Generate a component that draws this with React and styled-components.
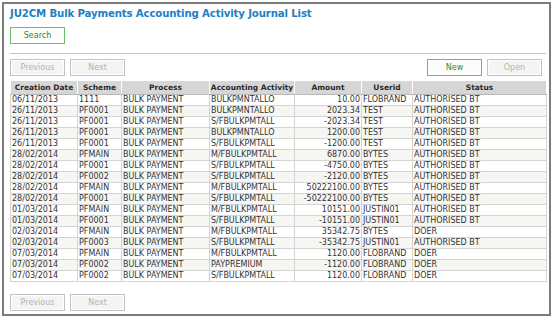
import styled, { createGlobalStyle } from "styled-components";

const GlobalStyle = createGlobalStyle`
    html, body {
        margin: 0;
        padding: 0;
        background: #ffffff;
    }
    body {
        padding: 2px;
    }
`;

const Frame = styled.div`
    box-sizing: border-box;
    width: 549px;
    height: 314px;
    border: 2px solid #7c7c7c;
    padding: 2px 3px 0 6px;
    display: flex;
    flex-direction: column;
    font-family: "DejaVu Sans", Verdana, sans-serif;
`;

const Title = styled.h1`
    margin: 0;
    font-size: 10.2px;
    font-weight: bold;
    color: #1c80c4;
    line-height: 16px;
    letter-spacing: -0.15px;
`;

const Row = styled.div`
    display: flex;
    align-items: center;
    gap: 5px;
    margin-top: ${(p) => p.$top || 0}px;
    margin-bottom: ${(p) => p.$bottom || 0}px;
    padding-right: ${(p) => p.$right || 0}px;
`;

const Spacer = styled.div`
    flex: 1;
`;

const Divider = styled.div`
    height: 1px;
    background: #c4c4c4;
    margin-top: 9px;
`;

const Button = styled.button`
    box-sizing: border-box;
    width: 55px;
    height: 17px;
    padding: 0;
    font-family: "DejaVu Sans", Verdana, sans-serif;
    font-size: 8px;
    border-radius: 0;
    border: 1px solid ${(p) => (p.$green ? "#6cba6c" : p.$soft ? "#a9d4a9" : "#c3c3c3")};
    background: ${(p) => (p.$green ? "#fbfdfb" : "#f4f4f4")};
    color: ${(p) => (p.$green ? "#2f8a2f" : "#b3b3b3")};
    box-shadow: inset 0 0 0 1px #ffffff;
`;

const Table = styled.table`
    border-collapse: collapse;
    width: 536px;
    margin-top: 4px;
    font-size: 8px;
    color: #333333;
    border: 1px solid #a8a8a8;
    table-layout: fixed;
`;

const Th = styled.th`
    background: #d6d6d6;
    color: #2a2a2a;
    font-size: 7.5px;
    font-weight: bold;
    height: 13px;
    padding: 0;
    border: 1px solid #ffffff;
    border-bottom-color: #b8b8b8;
    text-align: center;
    white-space: nowrap;
`;

const Tr = styled.tr`
    background: ${(p) => (p.$odd ? "#f6f6f2" : "#ffffff")};
`;

const Td = styled.td`
    height: 10px;
    line-height: 10px;
    padding: 0 1px;
    border: 1px solid #d4d4d4;
    text-align: ${(p) => (p.$right ? "right" : "left")};
    white-space: nowrap;
    overflow: hidden;
`;

const columns = [
    { label: "Creation Date", width: 67 },
    { label: "Scheme", width: 44 },
    { label: "Process", width: 88 },
    { label: "Accounting Activity", width: 85 },
    { label: "Amount", width: 67 },
    { label: "Userid", width: 51 },
    { label: "Status", width: 134 },
];

const rows = [
    ["06/11/2013", "1111", "BULK PAYMENT", "BULKPMNTALLO", "10.00", "FLOBRAND", "AUTHORISED BT"],
    ["26/11/2013", "PF0001", "BULK PAYMENT", "BULKPMNTALLO", "2023.34", "TEST", "AUTHORISED BT"],
    ["26/11/2013", "PF0001", "BULK PAYMENT", "S/FBULKPMTALL", "-2023.34", "TEST", "AUTHORISED BT"],
    ["26/11/2013", "PF0001", "BULK PAYMENT", "BULKPMNTALLO", "1200.00", "TEST", "AUTHORISED BT"],
    ["26/11/2013", "PF0001", "BULK PAYMENT", "S/FBULKPMTALL", "-1200.00", "TEST", "AUTHORISED BT"],
    ["28/02/2014", "PFMAIN", "BULK PAYMENT", "M/FBULKPMTALL", "6870.00", "BYTES", "AUTHORISED BT"],
    ["28/02/2014", "PF0001", "BULK PAYMENT", "S/FBULKPMTALL", "-4750.00", "BYTES", "AUTHORISED BT"],
    ["28/02/2014", "PF0002", "BULK PAYMENT", "S/FBULKPMTALL", "-2120.00", "BYTES", "AUTHORISED BT"],
    ["28/02/2014", "PFMAIN", "BULK PAYMENT", "M/FBULKPMTALL", "50222100.00", "BYTES", "AUTHORISED BT"],
    ["28/02/2014", "PF0001", "BULK PAYMENT", "S/FBULKPMTALL", "-50222100.00", "BYTES", "AUTHORISED BT"],
    ["01/03/2014", "PFMAIN", "BULK PAYMENT", "M/FBULKPMTALL", "10151.00", "JUSTIN01", "AUTHORISED BT"],
    ["01/03/2014", "PF0001", "BULK PAYMENT", "S/FBULKPMTALL", "-10151.00", "JUSTIN01", "AUTHORISED BT"],
    ["02/03/2014", "PFMAIN", "BULK PAYMENT", "M/FBULKPMTALL", "35342.75", "BYTES", "DOER"],
    ["02/03/2014", "PF0003", "BULK PAYMENT", "S/FBULKPMTALL", "-35342.75", "JUSTIN01", "AUTHORISED BT"],
    ["07/03/2014", "PFMAIN", "BULK PAYMENT", "M/FBULKPMTALL", "1120.00", "FLOBRAND", "DOER"],
    ["07/03/2014", "PF0002", "BULK PAYMENT", "PAYPREMIUM", "-1120.00", "FLOBRAND", "DOER"],
    ["07/03/2014", "PF0002", "BULK PAYMENT", "S/FBULKPMTALL", "1120.00", "FLOBRAND", "DOER"],
];

export default function App() {
    return (
        <>
            <GlobalStyle />
            <Frame>
                <Title>JU2CM Bulk Payments Accounting Activity Journal List</Title>
                <Row $top={5}>
                    <Button $green>Search</Button>
                </Row>
                <Divider />
                <Row $top={5} $right={4}>
                    <Button>Previous</Button>
                    <Button>Next</Button>
                    <Spacer />
                    <Button $green>New</Button>
                    <Button $soft>Open</Button>
                </Row>
                <Table>
                    <colgroup>
                        {columns.map((c) => (
                            <col key={c.label} style={{ width: c.width }} />
                        ))}
                    </colgroup>
                    <thead>
                        <tr>
                            {columns.map((c) => (
                                <Th key={c.label}>{c.label}</Th>
                            ))}
                        </tr>
                    </thead>
                    <tbody>
                        {rows.map((r, i) => (
                            <Tr key={i} $odd={i % 2 === 1}>
                                {r.map((cell, j) => (
                                    <Td key={j} $right={j === 4}>{cell}</Td>
                                ))}
                            </Tr>
                        ))}
                    </tbody>
                </Table>
                <Spacer />
                <Row $bottom={3}>
                    <Button>Previous</Button>
                    <Button>Next</Button>
                </Row>
            </Frame>
        </>
    );
}
